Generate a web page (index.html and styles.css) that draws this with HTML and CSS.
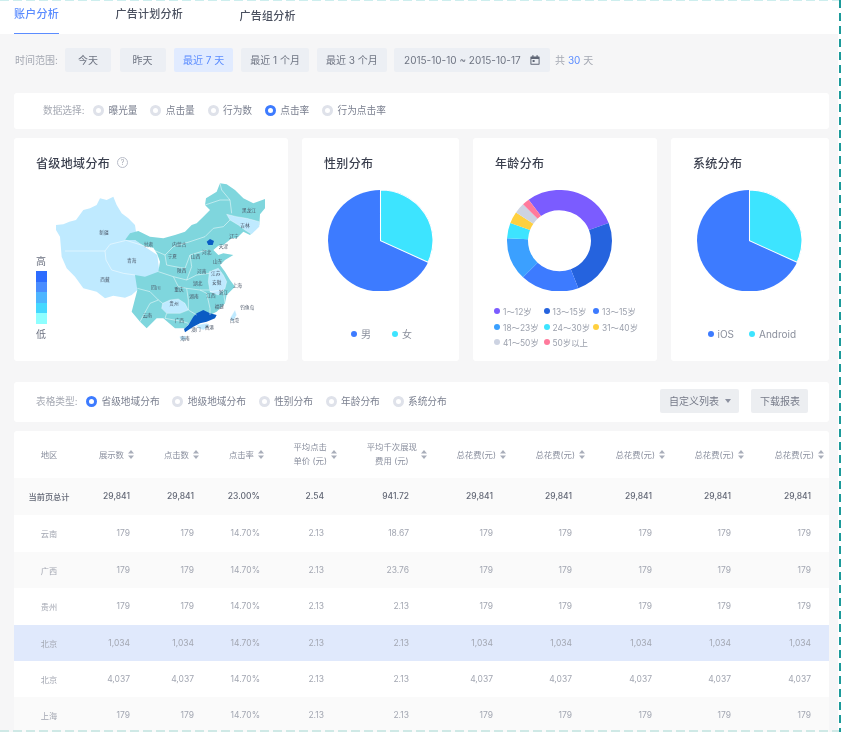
FILE: index.html
```html
<!DOCTYPE html>
<html lang="zh-CN">
<head>
<meta charset="utf-8">
<title>账户分析</title>
<link rel="stylesheet" href="styles.css">
</head>
<body>
<div class="page">
  <div class="soft">
    <nav class="tabs">
      <a class="tab tab-active">账户分析</a>
      <a class="tab">广告计划分析</a>
      <a class="tab tab-low">广告组分析</a>
    </nav>
    <main class="content">
      <div class="filters">
        <span class="filter-label">时间范围:</span>
        <button class="btn btn-wide">今天</button>
        <button class="btn btn-wide">昨天</button>
        <button class="btn btn-on">最近 7 天</button>
        <button class="btn">最近 1 个月</button>
        <button class="btn">最近 3 个月</button>
        <button class="btn btn-date">2015-10-10 ~ 2015-10-17
          <svg class="cal" viewBox="0 0 10 10" width="10" height="10"><path d="M1 1.5h8a.6.6 0 0 1 .6.6v7a.6.6 0 0 1-.6.6H1a.6.6 0 0 1-.6-.6v-7a.6.6 0 0 1 .6-.6zM1.4 4v4.7h7.2V4z" fill="#5f6675"/><rect x="2.3" y=".2" width="1.2" height="2" fill="#5f6675"/><rect x="6.5" y=".2" width="1.2" height="2" fill="#5f6675"/><rect x="2.6" y="5" width="2" height="2" fill="#5f6675"/></svg>
        </button>
        <span class="total">共 <b>30</b> 天</span>
      </div>

      <section class="bar bar-data">
        <span class="bar-label">数据选择:</span>
        <label class="radio">曝光量</label>
        <label class="radio">点击量</label>
        <label class="radio">行为数</label>
        <label class="radio radio-on">点击率</label>
        <label class="radio">行为点击率</label>
      </section>

      <section class="cards">
        <article class="card card-map">
          <h2 class="title">省级地域分布 <span class="help">?</span></h2>
          <div class="map-row">
            <div class="scale">
              <span>高</span>
              <div class="scale-bar"><i class="s1"></i><i class="s2"></i><i class="s3"></i><i class="s4"></i><i class="s5"></i></div>
              <span>低</span>
            </div>
            <svg class="map" viewBox="0 0 690 525" width="230" height="175">
              <path class="under" d="M18 150L40 148 58 140 78 135 100 105 120 100 140 90 150 70 170 75 190 65 200 90 215 115 235 130 255 150 258 170 240 185 280 212 322 240 328 290 262 345 245 360 225 368 190 362 165 370 140 350 100 340 75 305 50 280 35 245 30 185 18 165Z"/>
              <path class="land" d="M225 195L240 175 265 168 300 185 340 190 375 180 405 170 425 150 440 145 460 125 480 105 465 90 468 70 500 50 510 25 530 28 555 45 580 70 610 85 645 72 645 100 630 118 628 150 600 180 580 170 560 190 545 190 520 210 505 212 490 225 505 240 520 235 550 240 525 255 510 270 525 290 540 315 555 335 545 345 530 360 525 385 500 410 480 420 440 420 405 460 375 460 340 430 320 430 290 460 270 440 245 410 262 345 255 300 285 305 325 290 330 260 322 238 310 218 280 212 255 195Z"/>
              <g class="pale">
                <path d="M530 118L560 125 590 130 628 140 628 155 605 178 585 165 565 150 540 135Z"/>
                <path d="M478 290L505 280 520 300 530 320 525 340 505 360 480 350 475 320Z"/>
                <path d="M338 385L360 375 385 372 405 385 415 405 390 415 350 415 335 400Z"/>
                <path d="M440 450L470 445 480 452 460 465 445 460Z"/>
                <path d="M388 485L405 482 410 492 395 497Z"/>
                <path d="M555 405L560 420 548 440 540 430Z"/>
              </g>
              <g class="deep">
                <path d="M430 425L440 415 460 405 480 415 500 420 495 430 470 440 450 445 430 455 415 465 405 472 402 462 415 450Z"/>
                <path d="M470 200L480 192 492 198 488 210 475 210Z"/>
              </g>
              <g class="borders">
                <path d="M45 228H165L168 255 185 285 220 295 255 300M165 228L180 208 225 197"/>
                <path d="M225 195L280 212 345 240 370 215 420 200 465 185 490 160 520 155 540 135"/>
                <path d="M510 25L515 45 540 75 545 115M465 90L510 75 540 75"/>
                <path d="M345 240L350 270 375 275 405 280 420 240 470 225"/>
                <path d="M325 290L370 305 410 315 440 300 478 295M420 240L425 275 410 315"/>
                <path d="M262 340L300 350 325 375 338 385M370 305L385 335 410 340 450 345 478 345"/>
                <path d="M410 340L415 375 415 405 440 420M450 345L470 355 480 400 480 420"/>
                <path d="M480 350L520 345 525 385M270 440L300 385 325 375M350 415L345 430 400 440 415 445"/>
              </g>
              <g class="names">
                <text x="162" y="177">新疆</text><text x="165" y="317">西藏</text><text x="245" y="261">青海</text>
                <text x="295" y="213">甘肃</text><text x="388" y="212">内蒙古</text><text x="367" y="250">宁夏</text>
                <text x="395" y="290">陕西</text><text x="437" y="250">山西</text><text x="470" y="237">河北</text>
                <text x="520" y="220">天津</text><text x="552" y="188">辽宁</text><text x="585" y="157">吉林</text>
                <text x="597" y="110">黑龙江</text><text x="503" y="265">山东</text><text x="455" y="293">河南</text>
                <text x="497" y="301">江苏</text><text x="500" y="327">安徽</text><text x="562" y="337">上海</text>
                <text x="443" y="330">湖北</text><text x="318" y="342">四川</text><text x="387" y="347">重庆</text>
                <text x="432" y="370">湖南</text><text x="483" y="367">江西</text><text x="520" y="357">浙江</text>
                <text x="508" y="400">福建</text><text x="372" y="390">贵州</text><text x="292" y="425">云南</text>
                <text x="388" y="441">广西</text><text x="438" y="467">澳门</text><text x="478" y="462">香港</text>
                <text x="405" y="494">海南</text><text x="553" y="441">台湾</text><text x="592" y="402">钓鱼岛</text>
              </g>
            </svg>
          </div>
        </article>

        <article class="card card-sex">
          <h2 class="title">性别分布</h2>
          <svg class="pie" viewBox="0 0 200 200" preserveAspectRatio="none">
            <circle cx="100" cy="100" r="100" fill="#3d7bff"/>
            <path d="M100 100V0A100 100 0 0 1 190.6 142.3Z" fill="#3de4ff" stroke="#fff" stroke-width="2"/>
          </svg>
          <div class="legend legend-sex">
            <span class="key"><i class="dot c-blue"></i>男</span>
            <span class="key"><i class="dot c-cyan"></i>女</span>
          </div>
        </article>

        <article class="card card-age">
          <h2 class="title">年龄分布</h2>
          <svg class="pie donut" viewBox="0 0 200 200" preserveAspectRatio="none">
            <g transform="rotate(-90 100 100)" fill="none" stroke-width="40">
              <circle cx="100" cy="100" r="80" pathLength="360" stroke="#7b5cff" stroke-dasharray="105.5 360" transform="rotate(-36 100 100)"/>
              <circle cx="100" cy="100" r="80" pathLength="360" stroke="#2563de" stroke-dasharray="89.5 360" stroke-dashoffset="-69.5"/>
              <circle cx="100" cy="100" r="80" pathLength="360" stroke="#3d7bff" stroke-dasharray="65 360" stroke-dashoffset="-159"/>
              <circle cx="100" cy="100" r="80" pathLength="360" stroke="#3ba0ff" stroke-dasharray="49 360" stroke-dashoffset="-224"/>
              <circle cx="100" cy="100" r="80" pathLength="360" stroke="#3de4ff" stroke-dasharray="17.6 360" stroke-dashoffset="-273"/>
              <circle cx="100" cy="100" r="80" pathLength="360" stroke="#ffd03f" stroke-dasharray="13.4 360" stroke-dashoffset="-290.6"/>
              <circle cx="100" cy="100" r="80" pathLength="360" stroke="#cdd3e2" stroke-dasharray="12 360" stroke-dashoffset="-304"/>
              <circle cx="100" cy="100" r="80" pathLength="360" stroke="#ff7a9c" stroke-dasharray="8 360" stroke-dashoffset="-316"/>
            </g>
          </svg>
          <div class="legend-age">
            <span class="key"><i class="dot c-violet"></i>1～12岁</span>
            <span class="key"><i class="dot c-navy"></i>13～15岁</span>
            <span class="key"><i class="dot c-blue"></i>13～15岁</span>
            <span class="key"><i class="dot c-sky"></i>18～23岁</span>
            <span class="key"><i class="dot c-cyan"></i>24～30岁</span>
            <span class="key"><i class="dot c-yellow"></i>31～40岁</span>
            <span class="key"><i class="dot c-grey"></i>41～50岁</span>
            <span class="key"><i class="dot c-pink"></i>50岁以上</span>
          </div>
        </article>

        <article class="card card-os">
          <h2 class="title">系统分布</h2>
          <svg class="pie" viewBox="0 0 200 200" preserveAspectRatio="none">
            <circle cx="100" cy="100" r="100" fill="#3d7bff"/>
            <path d="M100 100V0A100 100 0 0 1 190.6 142.3Z" fill="#3de4ff" stroke="#fff" stroke-width="2"/>
          </svg>
          <div class="legend legend-os">
            <span class="key"><i class="dot c-blue"></i>iOS</span>
            <span class="key"><i class="dot c-cyan"></i>Android</span>
          </div>
        </article>
      </section>

      <section class="bar bar-table">
        <span class="bar-label">表格类型:</span>
        <label class="radio radio-on">省级地域分布</label>
        <label class="radio">地级地域分布</label>
        <label class="radio">性别分布</label>
        <label class="radio">年龄分布</label>
        <label class="radio">系统分布</label>
        <button class="action action-first">自定义列表<i class="caret"></i></button>
        <button class="action">下载报表</button>
      </section>

      <section class="table-wrap">
        <table class="grid">
          <colgroup>
            <col class="w70"><col class="w64"><col class="w64"><col class="w66"><col class="w64"><col class="w85"><col class="w84"><col class="w79"><col class="w80"><col class="w79"><col class="w80">
          </colgroup>
          <thead>
            <tr>
              <th class="first">地区</th>
              <th class="pad14"><span class="head">展示数<svg class="sort" viewBox="0 0 6 9" width="6" height="9"><path d="M3 0l3 3.6H0zM3 9L0 5.4h6z"/></svg></span></th>
              <th class="pad13"><span class="head">点击数<svg class="sort" viewBox="0 0 6 9" width="6" height="9"><path d="M3 0l3 3.6H0zM3 9L0 5.4h6z"/></svg></span></th>
              <th class="pad14"><span class="head">点击率<svg class="sort" viewBox="0 0 6 9" width="6" height="9"><path d="M3 0l3 3.6H0zM3 9L0 5.4h6z"/></svg></span></th>
              <th class="pad5"><span class="head"><span class="two">平均点击<br>单价 (元)</span><svg class="sort" viewBox="0 0 6 9" width="6" height="9"><path d="M3 0l3 3.6H0zM3 9L0 5.4h6z"/></svg></span></th>
              <th class="pad0"><span class="head"><span class="two">平均千次展现<br>费用 (元)</span><svg class="sort" viewBox="0 0 6 9" width="6" height="9"><path d="M3 0l3 3.6H0zM3 9L0 5.4h6z"/></svg></span></th>
              <th class="pad5"><span class="head">总花费(元)<svg class="sort" viewBox="0 0 6 9" width="6" height="9"><path d="M3 0l3 3.6H0zM3 9L0 5.4h6z"/></svg></span></th>
              <th class="pad5"><span class="head">总花费(元)<svg class="sort" viewBox="0 0 6 9" width="6" height="9"><path d="M3 0l3 3.6H0zM3 9L0 5.4h6z"/></svg></span></th>
              <th class="pad5"><span class="head">总花费(元)<svg class="sort" viewBox="0 0 6 9" width="6" height="9"><path d="M3 0l3 3.6H0zM3 9L0 5.4h6z"/></svg></span></th>
              <th class="pad5"><span class="head">总花费(元)<svg class="sort" viewBox="0 0 6 9" width="6" height="9"><path d="M3 0l3 3.6H0zM3 9L0 5.4h6z"/></svg></span></th>
              <th class="pad5"><span class="head">总花费(元)<svg class="sort" viewBox="0 0 6 9" width="6" height="9"><path d="M3 0l3 3.6H0zM3 9L0 5.4h6z"/></svg></span></th>
            </tr>
          </thead>
          <tbody>
            <tr class="sum tall"><td class="first">当前页总计</td><td>29,841</td><td>29,841</td><td>23.00%</td><td>2.54</td><td>941.72</td><td>29,841</td><td>29,841</td><td>29,841</td><td>29,841</td><td>29,841</td></tr>
            <tr class="tall"><td class="first">云南</td><td>179</td><td>179</td><td>14.70%</td><td>2.13</td><td>18.67</td><td>179</td><td>179</td><td>179</td><td>179</td><td>179</td></tr>
            <tr class="alt"><td class="first">广西</td><td>179</td><td>179</td><td>14.70%</td><td>2.13</td><td>23.76</td><td>179</td><td>179</td><td>179</td><td>179</td><td>179</td></tr>
            <tr class="tall"><td class="first">贵州</td><td>179</td><td>179</td><td>14.70%</td><td>2.13</td><td>2.13</td><td>179</td><td>179</td><td>179</td><td>179</td><td>179</td></tr>
            <tr class="hot"><td class="first">北京</td><td>1,034</td><td>1,034</td><td>14.70%</td><td>2.13</td><td>2.13</td><td>1,034</td><td>1,034</td><td>1,034</td><td>1,034</td><td>1,034</td></tr>
            <tr><td class="first">北京</td><td>4,037</td><td>4,037</td><td>14.70%</td><td>2.13</td><td>2.13</td><td>4,037</td><td>4,037</td><td>4,037</td><td>4,037</td><td>4,037</td></tr>
            <tr class="alt"><td class="first">上海</td><td>179</td><td>179</td><td>14.70%</td><td>2.13</td><td>2.13</td><td>179</td><td>179</td><td>179</td><td>179</td><td>179</td></tr>
          </tbody>
        </table>
      </section>
    </main>
  </div>
  <div class="dash dash-top"></div>
  <div class="dash dash-bottom"></div>
  <div class="dash dash-right"></div>
</div>
</body>
</html>
```
FILE: styles.css
```css
*, *::before, *::after { box-sizing: border-box; }
html, body { margin: 0; padding: 0; background: #fff; }
body { font-family: Inter, "Noto Sans CJK SC", "Liberation Sans", sans-serif; color: #6b7180; }
.page { position: relative; width: 842px; height: 732px; overflow: hidden; background: #fff; }
.soft { width: 838px; height: 732px; overflow: hidden; background: #f6f6f7; filter: blur(0.55px); }

.tabs { display: flex; height: 34px; padding-left: 14px; gap: 56.5px; background: #fff; }
.tab { height: 34px; padding-top: 6px; font-size: 11px; letter-spacing: .25px; line-height: 16px; color: #4b5160; font-weight: 500; }
.tab-active { color: #5b8cff; border-bottom: 1.5px solid #5b8cff; }
.tab-low { padding-top: 8px; }

.content { padding: 14px 9px 0 14px; }
.filters { display: flex; align-items: center; height: 24px; gap: 8px; font-size: 10px; }
.filter-label { margin-left: 1px; width: 41px; margin-right: 1px; padding-bottom: 1px; color: #a5a9b3; white-space: nowrap; }
.btn { height: 24px; padding: 0 9px 1px; border: 0; border-radius: 2px; background: #eceff4; color: #6e7482; font: inherit; font-size: 10px; white-space: nowrap; }
.btn-wide { width: 46px; padding: 0 0 1px; margin-right: .5px; }
.btn-on { background: #e1ebff; color: #5b8cff; }
.btn-date { display: flex; align-items: center; gap: 9px; padding: 0 10px 1px; width: 156px; margin-left: -.75px; }
.cal { flex: none; margin-top: 1px; }
.total { margin-left: -3px; padding-bottom: 1px; color: #a5a9b3; white-space: nowrap; }
.total b { font-weight: 400; color: #5b8cff; }

.bar { display: flex; align-items: center; background: #fff; border-radius: 3px; font-size: 9.7px; padding-bottom: 1.5px; }
.bar-data { height: 36px; margin-top: 21px; padding-left: 29px; }
.bar-table { height: 40px; margin-top: 21px; padding-left: 22px; }
.bar-label { width: 41px; margin-right: 9px; color: #a5a9b3; white-space: nowrap; }
.radio { display: flex; align-items: center; gap: 4.5px; margin-right: 12.7px; color: #7b8090; white-space: nowrap; }
.radio::before { content: ""; width: 11px; height: 11px; border-radius: 50%; border: 3px solid #dfe2ea; background: #fff; flex: none; }
.radio-on::before { border-color: #3d7bff; }

.cards { display: flex; gap: 14px; margin-top: 9px; height: 223px; }
.card { padding: 16px 0 0 22px; background: #fff; border-radius: 3px; }
.card-map { width: 274px; }
.card-sex { width: 157px; }
.card-age { width: 184px; }
.card-os { width: 158px; }
.title { display: flex; align-items: center; gap: 7px; height: 18px; margin: 0; padding-bottom: 1px; font-size: 12px; letter-spacing: .35px; font-weight: 500; color: #3a3f4e; white-space: nowrap; }
.help { width: 11px; height: 11px; border: 1px solid #b9bdc9; border-radius: 50%; font-size: 7px; line-height: 9px; font-weight: 400; text-align: center; letter-spacing: 0; color: #a5a9b3; }

.map-row { display: flex; align-items: flex-end; height: 175px; margin-top: 3px; }
.scale { display: flex; flex-direction: column; gap: 3px; width: 11px; margin: 0 3px 9px 0; font-size: 10px; line-height: 14px; color: #6b7180; }
.scale-bar { display: flex; flex-direction: column; width: 11px; height: 53px; }
.scale-bar i { flex: 1; }
.s1 { background: #2d6cff; }
.s2 { background: #4a8dff; }
.s3 { background: #4db5ff; }
.s4 { background: #45d8ff; }
.s5 { background: #8effff; }
.map { display: block; flex: none; }
.under { fill: #bfeaff; }
.land { fill: #7fd6dd; }
.pale path { fill: #bfeaff; stroke: #fff; stroke-width: 1; }
.deep path { fill: #0a5cc4; }
.borders path { fill: none; stroke: #fff; stroke-width: 2; opacity: .75; }
.names text { font-size: 14px; fill: #4a5566; text-anchor: middle; }

.pie { display: block; width: 105px; height: 101.5px; margin: 17.5px 0 0 3.5px; }
.donut { margin-left: 11.5px; }
.legend { display: flex; margin-top: 36px; height: 14px; font-size: 10px; line-height: 14px; color: #8a8f9c; }
.legend-sex { padding-left: 27px; gap: 21px; }
.legend-os { padding-left: 14.5px; gap: 15px; }
.key { display: flex; align-items: center; gap: 4px; white-space: nowrap; }
.dot { width: 6px; height: 6px; border-radius: 50%; flex: none; }
.legend-age { display: grid; grid-template-columns: repeat(3, 49.5px); grid-auto-rows: 15.5px; margin: 12.5px 0 0 -1px; font-size: 8.4px; color: #9ca1ad; }
.legend-age .key { gap: 3px; }
.c-blue { background: #3d7bff; }
.c-cyan { background: #3de4ff; }
.c-violet { background: #7b5cff; }
.c-navy { background: #2563de; }
.c-sky { background: #3ba0ff; }
.c-yellow { background: #ffd03f; }
.c-grey { background: #cdd3e2; }
.c-pink { background: #ff7a9c; }

.action { height: 24px; border: 0; border-radius: 2px; background: #eceef1; color: #757a88; font: inherit; font-size: 10px; padding: 0 9px 1px; margin-left: 12px; white-space: nowrap; display: flex; align-items: center; }
.action-first { margin-left: auto; gap: 6px; width: 79px; }
.bar-table .action:last-child { width: 57px; margin-right: 21px; }
.caret { width: 0; height: 0; border: 3.5px solid transparent; border-top: 4px solid #8c91a0; border-bottom: 0; }

.table-wrap { margin-top: 9px; width: 815px; background: #fff; border-radius: 3px 3px 0 0; overflow: hidden; }
.grid { table-layout: fixed; width: 815px; border-collapse: collapse; font-size: 8.5px; }
.w64 { width: 64px; } .w66 { width: 66px; } .w70 { width: 70px; } .w79 { width: 79px; } .w80 { width: 80px; } .w84 { width: 84px; } .w85 { width: 85px; }
th { height: 47px; padding: 0 0 1px; font-weight: 400; font-size: 8.4px; color: #8a8f9e; text-align: right; }
.head { display: inline-flex; align-items: center; gap: 4px; justify-content: flex-end; white-space: nowrap; }
.two { display: block; line-height: 14px; text-align: center; }
.sort { fill: #a9aeba; flex: none; }
.pad14 { padding-right: 14px; } .pad13 { padding-right: 13px; } .pad5 { padding-right: 5px; } .pad0 { padding-right: 0; }
td { height: 36px; padding: 0 18px 1px 0; text-align: right; color: #a3a7b2; white-space: nowrap; }
.tall td { height: 37px; }
th.first, td.first { padding: 0 0 1px; text-align: center; }
td.first { font-size: 8.2px; }
.sum td { background: #fafafa; color: #626775; font-weight: 500; }
.alt td { background: #fafafa; }
.hot td { background: #e0e9fc; }

.dash { position: absolute; }
.dash-top { left: 0; top: 0; width: 842px; height: 1px; background: repeating-linear-gradient(90deg, #cdeeee 0 9px, transparent 9px 13px); }
.dash-bottom { left: 0; bottom: 0; width: 842px; height: 2px; background: repeating-linear-gradient(90deg, #cfe9e6 0 9px, transparent 9px 13px); }
.dash-right { right: 1px; top: 0; width: 2px; height: 732px; background: repeating-linear-gradient(180deg, #1c9a9a 0 8px, transparent 8px 13px); }
```
